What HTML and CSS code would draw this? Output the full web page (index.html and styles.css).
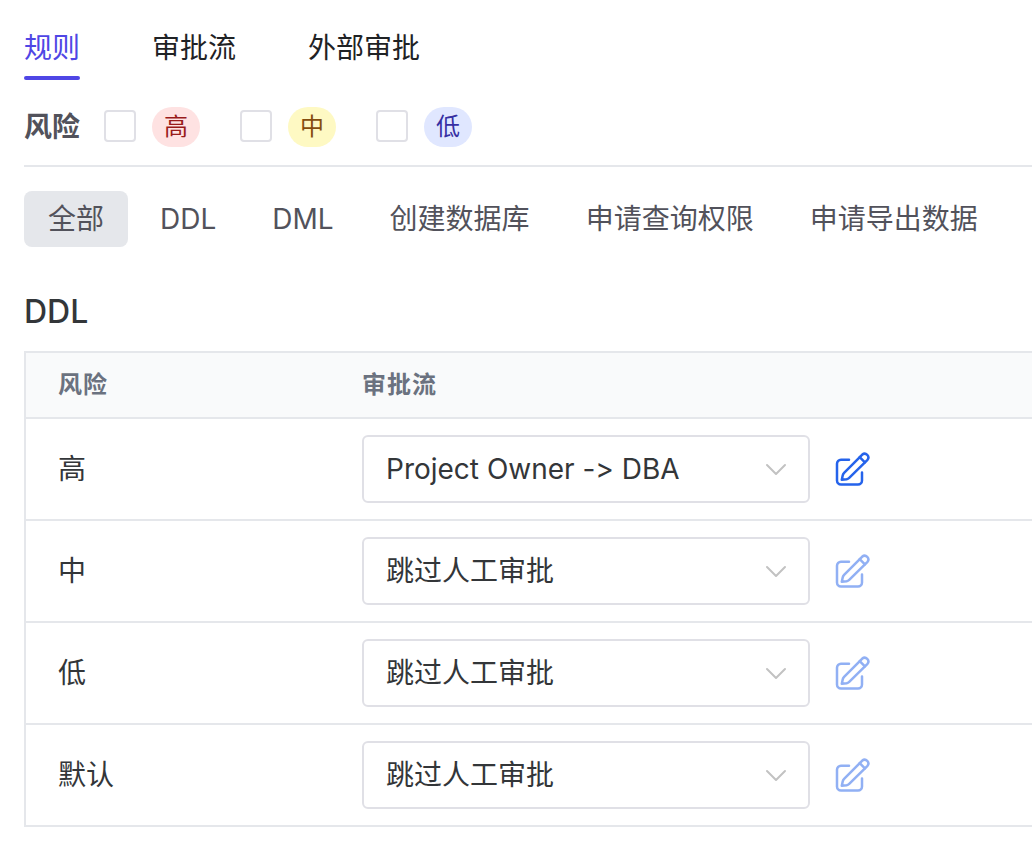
FILE: index.html
```html
<!DOCTYPE html>
<html lang="zh-CN">
<head>
    <meta charset="UTF-8">
    <meta name="viewport" content="width=device-width, initial-scale=1.0">
    <title>审批流</title>
    <link rel="stylesheet" href="styles.css">
</head>
<body>
    <!-- shared icons -->
    <svg class="sprite" aria-hidden="true">
        <symbol id="chevron" viewBox="0 0 24 24">
            <path d="M3 8L12 17L21 8"/>
        </symbol>
        <symbol id="edit" viewBox="0 0 36 36">
            <path d="M15 8.800H7a4 4 0 0 0-4 4v16.700a4 4 0 0 0 4 4h17a4 4 0 0 0 4-4V21.500"/>
            <path d="M7.800 28.800l.9-4.400a5 5 0 0 1 1.400-2.600L28.300 3.600a3.700 3.700 0 0 1 5.200 5.200L15.200 26.900a5 5 0 0 1-2.600 1.400z"/>
            <path d="M25.700 6.200l5.200 5.200"/>
        </symbol>
    </svg>

    <nav class="tabs">
        <a href="#rules" class="tab active">规则</a>
        <a href="#flows" class="tab">审批流</a>
        <a href="#external" class="tab">外部审批</a>
    </nav>

    <div class="risk-filter">
        <span class="risk-title">风险</span>
        <label class="risk-option"><input type="checkbox"><span class="tag tag-high">高</span></label>
        <label class="risk-option"><input type="checkbox"><span class="tag tag-medium">中</span></label>
        <label class="risk-option"><input type="checkbox"><span class="tag tag-low">低</span></label>
    </div>

    <div class="chips">
        <button class="chip active">全部</button>
        <button class="chip">DDL</button>
        <button class="chip">DML</button>
        <button class="chip">创建数据库</button>
        <button class="chip">申请查询权限</button>
        <button class="chip">申请导出数据</button>
    </div>

    <h2>DDL</h2>
    <table>
        <thead>
            <tr>
                <th class="risk-col">风险</th>
                <th>审批流</th>
            </tr>
        </thead>
        <tbody>
            <tr>
                <td>高</td>
                <td>
                    <div class="flow">
                        <div class="select-box">
                            <select aria-label="高">
                                <option>Project Owner -&gt; DBA</option>
                                <option>跳过人工审批</option>
                            </select>
                            <svg class="chevron"><use href="#chevron"/></svg>
                        </div>
                        <button class="edit" aria-label="编辑"><svg><use href="#edit"/></svg></button>
                    </div>
                </td>
            </tr>
            <tr>
                <td>中</td>
                <td>
                    <div class="flow">
                        <div class="select-box">
                            <select aria-label="中">
                                <option>跳过人工审批</option>
                                <option>Project Owner -&gt; DBA</option>
                            </select>
                            <svg class="chevron"><use href="#chevron"/></svg>
                        </div>
                        <button class="edit" aria-label="编辑" disabled><svg><use href="#edit"/></svg></button>
                    </div>
                </td>
            </tr>
            <tr>
                <td>低</td>
                <td>
                    <div class="flow">
                        <div class="select-box">
                            <select aria-label="低">
                                <option>跳过人工审批</option>
                                <option>Project Owner -&gt; DBA</option>
                            </select>
                            <svg class="chevron"><use href="#chevron"/></svg>
                        </div>
                        <button class="edit" aria-label="编辑" disabled><svg><use href="#edit"/></svg></button>
                    </div>
                </td>
            </tr>
            <tr>
                <td>默认</td>
                <td>
                    <div class="flow">
                        <div class="select-box">
                            <select aria-label="默认">
                                <option>跳过人工审批</option>
                                <option>Project Owner -&gt; DBA</option>
                            </select>
                            <svg class="chevron"><use href="#chevron"/></svg>
                        </div>
                        <button class="edit" aria-label="编辑" disabled><svg><use href="#edit"/></svg></button>
                    </div>
                </td>
            </tr>
        </tbody>
    </table>
</body>
</html>
```
FILE: styles.css
```css
:root {
    --primary: #4f46e5;
    --link: #2563eb;
    --text: #333639;
    --muted: #52525b;
    --line: #e5e7eb;
    --control-border: #e0e0e6;
}
* {
    box-sizing: border-box;
}
body {
    margin: 0;
    padding: 16px 0 16px 24px;
    background: #fff;
    color: var(--text);
    font-family: Inter, "Noto Sans CJK SC", sans-serif;
    font-size: 28px;
    line-height: 40px;
    font-variant-ligatures: none;
}
button, select {
    font: inherit;
    font-variant-ligatures: none;
    color: inherit;
}
svg {
    fill: none;
    stroke: currentColor;
    stroke-linecap: round;
    stroke-linejoin: round;
}
.sprite {
    display: none;
}

/* tabs */
.tabs {
    display: flex;
    gap: 72px;
}
.tab {
    position: relative;
    height: 64px;
    padding-top: 12px;
    color: #1f2225;
    text-decoration: none;
}
.tab.active {
    color: var(--primary);
}
.tab.active::after {
    content: '';
    position: absolute;
    left: 0;
    right: 0;
    bottom: 0;
    height: 4px;
    border-radius: 2px;
    background: var(--primary);
}

/* risk filter */
.risk-filter {
    display: flex;
    align-items: center;
    padding: 27px 0 18px;
    border-bottom: 2px solid var(--line);
}
.risk-title {
    margin-right: 24px;
    color: var(--muted);
    font-weight: 700;
}
.risk-option {
    display: flex;
    align-items: center;
    gap: 16px;
    margin-right: 40px;
}
.risk-option input {
    appearance: none;
    width: 32px;
    height: 32px;
    margin: 0 0 2px;
    border: 2px solid var(--control-border);
    border-radius: 4px;
}
.risk-option input:checked {
    background: var(--primary);
}
.tag {
    padding: 0 12px;
    border-radius: 20px;
    font-size: 24px;
}
.tag-high {
    background: #fee2e2;
    color: #991b1b;
}
.tag-medium {
    background: #fef9c3;
    color: #854d0e;
}
.tag-low {
    background: #e0e7ff;
    color: #3730a3;
}

/* type chips */
.chips {
    display: flex;
    flex-wrap: wrap;
    gap: 8px;
    margin: 24px 0 45px;
}
.chip {
    padding: 8px 24px;
    border: none;
    border-radius: 8px;
    background: none;
    color: var(--muted);
    cursor: pointer;
}
.chip.active {
    background: var(--line);
}

h2 {
    margin: 0 0 19px;
    font-size: 32px;
    font-weight: 500;
    line-height: 40px;
}

/* rules table */
table {
    width: 100%;
    border: 2px solid var(--line);
    border-right: none;
    border-bottom: none;
    border-spacing: 0;
}
th, td {
    padding: 16px 32px;
    border-bottom: 2px solid var(--line);
    text-align: left;
}
th {
    background: #f9fafb;
    color: #6b7280;
    font-size: 24px;
    font-weight: 700;
    line-height: 32px;
    letter-spacing: 1px;
}
.risk-col {
    width: 304px;
}
.flow {
    display: flex;
    align-items: center;
    gap: 24px;
}
.select-box {
    position: relative;
    width: 448px;
}
select {
    display: block;
    appearance: none;
    width: 100%;
    height: 68px;
    padding: 0 64px 0 22px;
    border: 2px solid var(--control-border);
    border-radius: 6px;
    background: #fff;
}
.chevron {
    position: absolute;
    top: 22px;
    right: 22px;
    width: 24px;
    height: 24px;
    color: #c2c2c2;
    stroke-width: 2px;
    pointer-events: none;
}
.edit {
    display: flex;
    padding: 0;
    border: none;
    background: none;
    color: var(--link);
    cursor: pointer;
}
.edit:disabled {
    opacity: 0.5;
    cursor: not-allowed;
}
.edit svg {
    width: 36px;
    height: 36px;
    stroke-width: 2.5;
}
```
